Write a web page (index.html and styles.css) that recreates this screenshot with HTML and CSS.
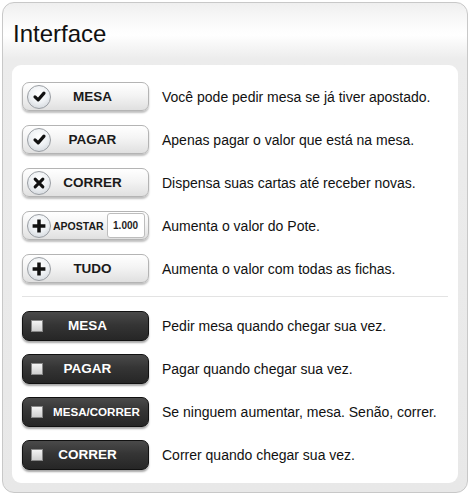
FILE: index.html
```html
<!DOCTYPE html>
<html>
<head>
<meta charset="utf-8">
<link rel="stylesheet" href="styles.css">
</head>
<body>
<div class="panel">
  <h1 class="title">Interface</h1>
  <div class="content">
    <div class="row">
      <div class="btn light"><span class="ico"><svg viewBox="0 0 20 20" width="15" height="15"><path d="M4 10.5 L8.2 14.5 L16 5.5" fill="none" stroke="#111" stroke-width="4.2" stroke-linecap="round" stroke-linejoin="round"/></svg></span><span class="lbl">MESA</span></div>
      <p class="desc">Você pode pedir mesa se já tiver apostado.</p>
    </div>
    <div class="row">
      <div class="btn light"><span class="ico"><svg viewBox="0 0 20 20" width="15" height="15"><path d="M4 10.5 L8.2 14.5 L16 5.5" fill="none" stroke="#111" stroke-width="4.2" stroke-linecap="round" stroke-linejoin="round"/></svg></span><span class="lbl">PAGAR</span></div>
      <p class="desc">Apenas pagar o valor que está na mesa.</p>
    </div>
    <div class="row">
      <div class="btn light"><span class="ico"><svg viewBox="0 0 20 20" width="14" height="14"><path d="M4.5 4.5 L15.5 15.5 M15.5 4.5 L4.5 15.5" fill="none" stroke="#111" stroke-width="4.4" stroke-linecap="round"/></svg></span><span class="lbl">CORRER</span></div>
      <p class="desc">Dispensa suas cartas até receber novas.</p>
    </div>
    <div class="row">
      <div class="btn light bet"><span class="ico"><svg viewBox="0 0 20 20" width="16" height="16"><path d="M10 2 V18 M2 10 H18" fill="none" stroke="#111" stroke-width="4.4"/></svg></span><span class="lbl small">APOSTAR</span><span class="amount">1.000</span></div>
      <p class="desc">Aumenta o valor do Pote.</p>
    </div>
    <div class="row">
      <div class="btn light"><span class="ico"><svg viewBox="0 0 20 20" width="16" height="16"><path d="M10 2 V18 M2 10 H18" fill="none" stroke="#111" stroke-width="4.4"/></svg></span><span class="lbl">TUDO</span></div>
      <p class="desc">Aumenta o valor com todas as fichas.</p>
    </div>
    <hr class="divider">
    <div class="row dark-row">
      <div class="btn dark"><span class="box"></span><span class="lbl">MESA</span></div>
      <p class="desc">Pedir mesa quando chegar sua vez.</p>
    </div>
    <div class="row dark-row">
      <div class="btn dark"><span class="box"></span><span class="lbl">PAGAR</span></div>
      <p class="desc">Pagar quando chegar sua vez.</p>
    </div>
    <div class="row dark-row">
      <div class="btn dark"><span class="box"></span><span class="lbl tight">MESA/CORRER</span></div>
      <p class="desc">Se ninguem aumentar, mesa. Senão, correr.</p>
    </div>
    <div class="row dark-row">
      <div class="btn dark"><span class="box"></span><span class="lbl">CORRER</span></div>
      <p class="desc">Correr quando chegar sua vez.</p>
    </div>
  </div>
</div>
</body>
</html>
```

FILE: styles.css
```css
* { box-sizing: border-box; }
html, body { margin: 0; padding: 0; background: #fff; }
body {
  width: 470px;
  height: 495px;
  padding: 2px;
  font-family: "Liberation Sans", Arial, sans-serif;
}
.panel {
  width: 466px;
  height: 491px;
  border: 1px solid #c8c8c8;
  border-radius: 12px;
  background: linear-gradient(to bottom, #efefef 0px, #fbfbfb 22px, #ffffff 32px, #ececec 56px, #e8e8e8 100%);
  padding: 0 9px 9px 9px;
  display: flex;
  flex-direction: column;
}
.title {
  margin: 0;
  height: 62px;
  padding: 17px 0 0 1px;
  font-size: 24px;
  font-weight: normal;
  color: #111;
  line-height: 28px;
}
.content {
  flex: 1;
  background: #fff;
  border-radius: 9px;
  padding: 17px 10px 0 10px;
  display: flex;
  flex-direction: column;
}
.row {
  display: flex;
  align-items: center;
  height: 29px;
  margin-bottom: 14px;
}
.desc {
  margin: 0 0 0 13px;
  font-size: 14px;
  color: #111;
}
.btn {
  flex: none;
  display: flex;
  align-items: center;
  width: 127px;
  height: 29px;
  border-radius: 7px;
  position: relative;
}
.light {
  background: linear-gradient(to bottom, #ffffff 0%, #f4f4f4 45%, #e0e0e0 100%);
  border: 1px solid #b4b4b4;
  box-shadow: 0 2px 2px rgba(0,0,0,0.25);
  padding-left: 4px;
}
.ico {
  flex: none;
  width: 24px;
  height: 24px;
  border-radius: 50%;
  border: 1px solid #9a9ea3;
  background: radial-gradient(circle at 50% 35%, #ffffff 0%, #eef1f4 50%, #c9ced4 100%);
  display: flex;
  align-items: center;
  justify-content: center;
}
.lbl {
  flex: 1;
  text-align: center;
  font-weight: bold;
  font-size: 13.5px;
  color: #1a1a1a;
  padding-right: 14px;
}
.lbl.small {
  flex: none;
  font-size: 10.5px;
  padding: 0 0 0 2px;
}
.amount {
  flex: none;
  margin-left: 3px;
  width: 38px;
  height: 25px;
  border: 1px solid #bdbdbd;
  border-radius: 3px;
  background: #fff;
  font-weight: bold;
  font-size: 10px;
  color: #1e1e1e;
  display: flex;
  align-items: center;
  justify-content: center;
}
.divider {
  border: 0;
  border-top: 1px solid #e3e3e3;
  margin: -1px 0 14px 0;
  width: 426px;
}
.dark {
  height: 30px;
  background: linear-gradient(to bottom, #4a4a4a 0%, #353535 45%, #262626 100%);
  border: 1px solid #111;
  box-shadow: 0 2px 2px rgba(0,0,0,0.35);
  padding-left: 8px;
}
.box {
  flex: none;
  width: 12px;
  height: 12px;
  border: 1px solid #888;
  background: linear-gradient(to bottom, #f4f4f4, #cfcfcf);
}
.dark .lbl {
  color: #fff;
  padding-right: 16px;
}
.dark .lbl.tight {
  font-size: 11.6px;
  padding: 0 0 0 2px;
}
```
